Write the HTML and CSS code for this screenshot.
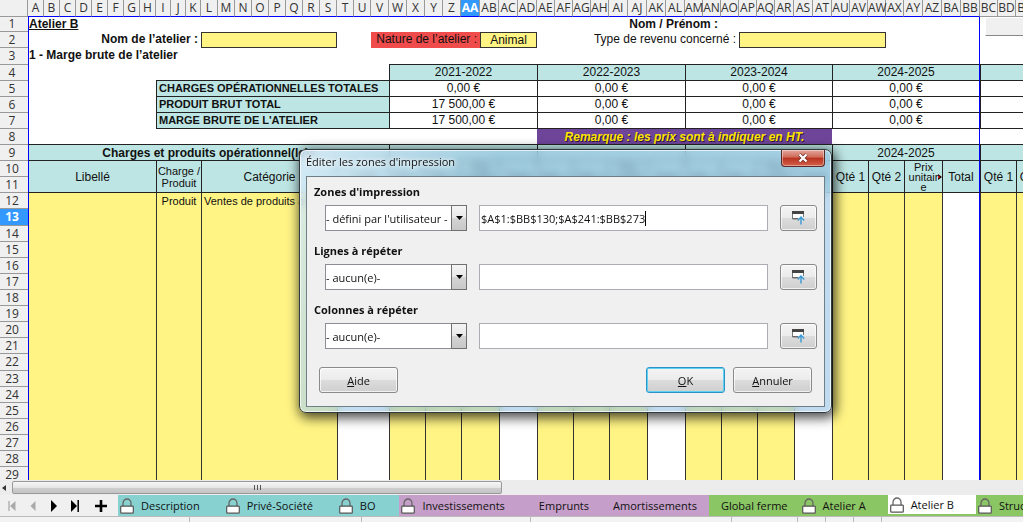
FILE: index.html
```html
<!DOCTYPE html>
<html lang="fr">
<head>
<meta charset="utf-8">
<title>Atelier B</title>
<link rel="stylesheet" href="styles.css">
</head>
<body>
<svg class="defs" aria-hidden="true">
  <symbol id="lock" viewBox="0 0 14 16"><path d="M3 8.500V5.200a4 4.200 0 0 1 8 0V8.500" fill="none" stroke="#666" stroke-width="1.300"/><rect x=".7" y="8.200" width="12.600" height="7" rx=".8" fill="#fff" stroke="#555" stroke-width="1.200"/></symbol>
  <symbol id="shrink" viewBox="0 0 13 14"><path d="M.5 1v7H6.500M11.500 6V1" fill="none" stroke="#777"/><path d="M0 0h12v3H0z" fill="#444"/><path d="M1 3h10v4H1z" fill="#fff"/><path d="M.5 7.500H6" stroke="#666"/><path d="M9 13.500V6.500M5.800 9.500L9 6l3.200 3.500" fill="none" stroke="#3a9bd5" stroke-width="1.400"/></symbol>
  <symbol id="caret" viewBox="0 0 7 4"><path d="M0 0h7L3.500 4z" fill="#000"/></symbol>
</svg>
<div class="app">
  <main class="sheet">
    <table class="grid">
      <colgroup><col class="c-head"></colgroup>
      <colgroup><col class="w16" span="8"><col class="w15" span="3"><col class="w17" span="10"><col class="w18"></colgroup>
      <colgroup><col class="w18" span="4"><col class="w19" span="4"></colgroup>
      <colgroup><col class="w18" span="4"><col class="w19" span="4"></colgroup>
      <colgroup><col class="w18" span="5"><col class="w19" span="3"></colgroup>
      <colgroup><col class="w18" span="4"><col class="w19" span="4"></colgroup>
      <colgroup><col class="w18" span="4"></colgroup>
      <thead>
        <tr><th class="corner"></th><th>A</th><th>B</th><th>C</th><th>D</th><th>E</th><th>F</th><th>G</th><th>H</th><th>I</th><th>J</th><th>K</th><th>L</th><th>M</th><th>N</th><th>O</th><th>P</th><th>Q</th><th>R</th><th>S</th><th>T</th><th>U</th><th>V</th><th>W</th><th>X</th><th>Y</th><th>Z</th><th class="current">AA</th><th>AB</th><th>AC</th><th>AD</th><th>AE</th><th>AF</th><th>AG</th><th>AH</th><th>AI</th><th>AJ</th><th>AK</th><th>AL</th><th>AM</th><th>AN</th><th>AO</th><th>AP</th><th>AQ</th><th>AR</th><th>AS</th><th>AT</th><th>AU</th><th>AV</th><th>AW</th><th>AX</th><th>AY</th><th>AZ</th><th>BA</th><th>BB</th><th class="outside">BC</th><th class="outside">BD</th><th class="outside">BE</th><th class="outside"></th></tr>
      </thead>
      <tbody class="summary">
        <tr class="first"><th>1</th><td class="area-l bold under" colspan="22">Atelier B</td><td colspan="18" class="bold right">Nom / Prénom :</td><td colspan="14" class="area-r"></td><td colspan="4"></td></tr>
        <tr><th>2</th><td class="area-l bold right" colspan="11">Nom de l’atelier :</td><td class="field" colspan="8"></td><td colspan="2"></td><td class="nature" colspan="6">Nature de l’atelier :</td><td class="field center" colspan="3">Animal</td><td class="right" colspan="11">Type de revenu concerné :</td><td class="field" colspan="8"></td><td class="area-r" colspan="5"></td><td colspan="4"></td></tr>
        <tr class="tall"><th>3</th><td class="area-l bold" colspan="22">1 - Marge brute de l’atelier</td><td class="line area-r" colspan="32"></td><td class="line" colspan="4"></td></tr>
        <tr><th>4</th><td class="area-l" colspan="8"></td><td class="line" colspan="14"></td><td class="teal cell" colspan="8">2021-2022</td><td class="teal cell" colspan="8">2022-2023</td><td class="teal cell" colspan="8">2023-2024</td><td class="teal cell area-r" colspan="8">2024-2025</td><td class="teal cell" colspan="4"></td></tr>
        <tr><th>5</th><td class="area-l" colspan="8"></td><td class="teal cell label" colspan="14">CHARGES OPÉRATIONNELLES TOTALES</td><td class="cell" colspan="8">0,00 €</td><td class="cell" colspan="8">0,00 €</td><td class="cell" colspan="8">0,00 €</td><td class="cell area-r" colspan="8">0,00 €</td><td class="cell" colspan="4"></td></tr>
        <tr><th>6</th><td class="area-l" colspan="8"></td><td class="teal cell label" colspan="14">PRODUIT BRUT TOTAL</td><td class="cell" colspan="8">17 500,00 €</td><td class="cell" colspan="8">0,00 €</td><td class="cell" colspan="8">0,00 €</td><td class="cell area-r" colspan="8">0,00 €</td><td class="cell" colspan="4"></td></tr>
        <tr><th>7</th><td class="area-l" colspan="8"></td><td class="teal cell label" colspan="14">MARGE BRUTE DE L'ATELIER</td><td class="cell" colspan="8">17 500,00 €</td><td class="cell" colspan="8">0,00 €</td><td class="cell" colspan="8">0,00 €</td><td class="cell area-r" colspan="8">0,00 €</td><td class="cell" colspan="4"></td></tr>
      </tbody>
      <tbody>
        <tr><th>8</th><td class="area-l line" colspan="30"></td><td class="remark line" colspan="16">Remarque : les prix sont à indiquer en HT.</td><td class="area-r line" colspan="8"></td><td class="line" colspan="4"></td></tr>
        <tr><th>9</th><td class="area-l teal line center bold" colspan="22">Charges et produits opérationnel(le)s</td><td class="teal cell" colspan="8"></td><td class="teal cell" colspan="8"></td><td class="teal cell" colspan="8"></td><td class="teal cell area-r" colspan="8">2024-2025</td><td class="teal cell" colspan="4"></td></tr>
        <tr><th>10</th><td class="area-l teal line center" colspan="8" rowspan="2">Libellé</td><td class="teal cell small" colspan="3" rowspan="2">Charge / Produit</td><td class="teal cell" colspan="8" rowspan="2">Catégorie</td><td class="teal cell" colspan="3" rowspan="2">Unité</td>
          <td class="teal cell" colspan="2" rowspan="2">Qté 1</td><td class="teal cell" colspan="2" rowspan="2">Qté 2</td><td class="teal cell price" colspan="2" rowspan="2">Prix unitair e</td><td class="teal cell" colspan="2" rowspan="2">Total</td>
          <td class="teal cell" colspan="2" rowspan="2">Qté 1</td><td class="teal cell" colspan="2" rowspan="2">Qté 2</td><td class="teal cell price" colspan="2" rowspan="2">Prix unitair e</td><td class="teal cell" colspan="2" rowspan="2">Total</td>
          <td class="teal cell" colspan="2" rowspan="2">Qté 1</td><td class="teal cell" colspan="2" rowspan="2">Qté 2</td><td class="teal cell price" colspan="2" rowspan="2">Prix unitair e</td><td class="teal cell" colspan="2" rowspan="2">Total</td>
          <td class="teal cell" colspan="2" rowspan="2">Qté 1</td><td class="teal cell" colspan="2" rowspan="2">Qté 2</td><td class="teal cell price" colspan="2" rowspan="2">Prix unitair e<svg class="more" viewBox="0 0 4 6"><path d="M0 0l4 3-4 3z" fill="#200"/><path d="M0 1.500l2 1.500-2 1.500z" fill="#e22"/></svg></td><td class="teal cell area-r" colspan="2" rowspan="2">Total</td>
          <td class="teal cell" colspan="2" rowspan="2">Qté 1</td><td class="teal cell" colspan="2" rowspan="2">Qté 2</td></tr>
        <tr><th>11</th></tr>
        <tr><th>12</th><td class="area-l yellow" colspan="8"></td><td class="yellow side small" colspan="3">Produit</td><td class="yellow side small text" colspan="8">Ventes de produits animaux</td><td class="side" colspan="3"></td>
          <td class="yellow side" colspan="2"></td><td class="yellow side" colspan="2"></td><td class="yellow side" colspan="2"></td><td class="side" colspan="2"></td>
          <td class="yellow side" colspan="2"></td><td class="yellow side" colspan="2"></td><td class="yellow side" colspan="2"></td><td class="side" colspan="2"></td>
          <td class="yellow side" colspan="2"></td><td class="yellow side" colspan="2"></td><td class="yellow side" colspan="2"></td><td class="side" colspan="2"></td>
          <td class="yellow side" colspan="2"></td><td class="yellow side" colspan="2"></td><td class="yellow side" colspan="2"></td><td class="side area-r" colspan="2"></td>
          <td class="yellow side" colspan="2"></td><td class="yellow side" colspan="2"></td></tr>
        <tr class="tall"><th class="current">13</th><td class="area-l yellow" colspan="8" rowspan="17"></td><td class="yellow side" colspan="3" rowspan="17"></td><td class="yellow side" colspan="8" rowspan="17"></td><td class="side" colspan="3" rowspan="17"></td>
          <td class="yellow side" colspan="2" rowspan="17"></td><td class="yellow side" colspan="2" rowspan="17"></td><td class="yellow side" colspan="2" rowspan="17"></td><td class="side" colspan="2" rowspan="17"></td>
          <td class="yellow side" colspan="2" rowspan="17"></td><td class="yellow side" colspan="2" rowspan="17"></td><td class="yellow side" colspan="2" rowspan="17"></td><td class="side" colspan="2" rowspan="17"></td>
          <td class="yellow side" colspan="2" rowspan="17"></td><td class="yellow side" colspan="2" rowspan="17"></td><td class="yellow side" colspan="2" rowspan="17"></td><td class="side" colspan="2" rowspan="17"></td>
          <td class="yellow side" colspan="2" rowspan="17"></td><td class="yellow side" colspan="2" rowspan="17"></td><td class="yellow side" colspan="2" rowspan="17"></td><td class="side area-r" colspan="2" rowspan="17"></td>
          <td class="yellow side" colspan="2" rowspan="17"></td><td class="yellow side" colspan="2" rowspan="17"></td></tr>
        <tr><th>14</th></tr><tr><th>15</th></tr><tr><th>16</th></tr><tr><th>17</th></tr><tr><th>18</th></tr><tr><th>19</th></tr><tr><th>20</th></tr><tr><th>21</th></tr>
        <tr class="tall"><th>22</th></tr><tr><th>23</th></tr><tr><th>24</th></tr><tr><th>25</th></tr><tr><th>26</th></tr><tr><th>27</th></tr><tr><th>28</th></tr><tr><th>29</th></tr>
      </tbody>
    </table>
    <button class="sheet-button" aria-label="Action"></button>
  </main>

  <div class="scrollbar">
    <button class="scroll-left" aria-label="Défiler à gauche"><svg width="4" height="6" viewBox="0 0 4 6"><path d="M4 0v6L0 3z" fill="#333"/></svg></button>
    <div class="track"><div class="thumb"><i></i><i></i><i></i></div></div>
  </div>

  <nav class="tabs">
    <div class="nav">
      <button aria-label="Première feuille" disabled><svg viewBox="0 0 12 12"><path d="M3 1v10" stroke="#aaa" stroke-width="1.300"/><path d="M9.500 1v10L4 6z" fill="#aaa"/></svg></button>
      <button aria-label="Feuille précédente" disabled><svg viewBox="0 0 12 12"><path d="M8.500 1v10L3.500 6z" fill="#aaa"/></svg></button>
      <button aria-label="Feuille suivante"><svg viewBox="0 0 12 12"><path d="M3 0v12l6-6z" fill="#000"/></svg></button>
      <button aria-label="Dernière feuille"><svg viewBox="0 0 12 12"><path d="M2 0v12l6-6z" fill="#000"/><path d="M9.200 0v12" stroke="#000" stroke-width="1.500"/></svg></button>
      <button class="add" aria-label="Ajouter une feuille"><svg viewBox="0 0 12 12"><path d="M6 0v12M0 6h12" stroke="#000" stroke-width="2.600"/></svg></button>
    </div>
    <button class="tab aqua"><svg><use href="#lock"/></svg>Description</button>
    <button class="tab aqua"><svg><use href="#lock"/></svg>Privé-Société</button>
    <button class="tab aqua"><svg><use href="#lock"/></svg>BO</button>
    <button class="tab lilac"><svg><use href="#lock"/></svg>Investissements</button>
    <button class="tab lilac open">Emprunts</button>
    <button class="tab lilac open">Amortissements</button>
    <button class="tab green open">Global ferme</button>
    <button class="tab green"><svg><use href="#lock"/></svg>Atelier A</button>
    <button class="tab green active"><svg><use href="#lock"/></svg>Atelier B</button>
    <button class="tab green"><svg><use href="#lock"/></svg>Structure</button>
  </nav>
  <footer class="status"><span class="s190"></span><span class="s172"></span><span class="s169"></span><span class="s201"></span><span class="s66"></span><span class="s28"></span><span class="s28"></span><span class="s28"></span></footer>
</div>

<section class="dialog" role="dialog" aria-labelledby="dlg-title">
  <header class="titlebar"><span id="dlg-title">Éditer les zones d'impression</span>
    <button class="close" aria-label="Fermer"><svg viewBox="0 0 12 10"><path d="M2.500 1.500l7 7M9.500 1.500l-7 7" stroke="#6b2a22" stroke-width="3.800"/><path d="M2.500 1.500l7 7M9.500 1.500l-7 7" stroke="#fff" stroke-width="2.400"/></svg></button>
  </header>
  <form class="client">
    <label class="heading" for="area">Zones d'impression</label>
    <div class="row">
      <span class="combo"><select id="area"><option>- défini par l'utilisateur -</option></select><span class="drop"><svg><use href="#caret"/></svg></span></span>
      <span class="entry"><input type="text" aria-label="Plage d'impression" value="$A$1:$BB$130;$A$241:$BB$273" size="27"><i class="cursor"></i></span>
      <button type="button" class="btn pick" aria-label="Réduire"><svg><use href="#shrink"/></svg></button>
    </div>
    <label class="heading" for="rows">Lignes à répéter</label>
    <div class="row">
      <span class="combo"><select id="rows"><option>- aucun(e)-</option></select><span class="drop"><svg><use href="#caret"/></svg></span></span>
      <span class="entry"><input type="text" aria-label="Plage de lignes"></span>
      <button type="button" class="btn pick" aria-label="Réduire"><svg><use href="#shrink"/></svg></button>
    </div>
    <label class="heading" for="cols">Colonnes à répéter</label>
    <div class="row">
      <span class="combo"><select id="cols"><option>- aucun(e)-</option></select><span class="drop"><svg><use href="#caret"/></svg></span></span>
      <span class="entry"><input type="text" aria-label="Plage de colonnes"></span>
      <button type="button" class="btn pick" aria-label="Réduire"><svg><use href="#shrink"/></svg></button>
    </div>
    <div class="actions">
      <button type="button" class="btn"><u>A</u>ide</button>
      <button type="button" class="btn default"><u>O</u>K</button>
      <button type="button" class="btn"><u>A</u>nnuler</button>
    </div>
  </form>
</section>
</body>
</html>
```
FILE: styles.css
```css
:root {
  --ui: "Open Sans", "Noto Sans", sans-serif;
  --teal: #bde5e3;
  --yellow: #fff484;
  --blue: #0000ff;
}
* { box-sizing: border-box; }
body { margin: 0; overflow: hidden; font-family: var(--ui); font-size: 11px; color: #111; }
button, select, input { font: inherit; color: inherit; margin: 0; }
.defs { position: absolute; width: 0; height: 0; }
.app { display: flex; flex-direction: column; height: 100vh; background: #f0f0f0; }

/* Spreadsheet */
.sheet { position: relative; flex: 1; min-height: 0; overflow: hidden; background: #fff; }
.grid { table-layout: fixed; width: 0; border-collapse: separate; border-spacing: 0; font-family: "Liberation Sans", Arial, sans-serif; font-size: 12px; line-height: 14px; color: #111; }
.c-head { width: 28px; }
.w15 { width: 15px; }
.w16 { width: 16px; }
.w17 { width: 17px; }
.w18 { width: 18px; }
.w19 { width: 19px; }
.grid th, .grid td { padding: 0; white-space: nowrap; }
.grid tr { height: 16px; }
.grid tr.tall { height: 17px; }
.grid tr.first { height: 15px; }
.grid thead tr { height: 17px; }
.grid th { font-family: var(--ui); font-size: 12px; font-weight: 400; color: #333; background: #f0f0f0; }
.grid thead th { border-right: 1px solid #999; border-bottom: 1px solid var(--blue); }
.grid thead .corner, .grid thead .outside { border-bottom-color: #999; }
.grid tbody th { padding-right: 4px; border-bottom: 1px solid #999; }
.grid th.current { background: #3399ff; color: #fff; font-weight: 700; }
.summary td { vertical-align: top; }
.area-l { border-left: 1px solid var(--blue); }
.grid .area-r { border-right: 1px solid var(--blue); }
.bold { font-weight: 700; }
.under { text-decoration: underline; }
.grid .right { padding-right: 3px; text-align: right; }
.center { text-align: center; }
.line { border-bottom: 1px solid #222; }
.cell { border-left: 1px solid #222; border-bottom: 1px solid #222; text-align: center; }
.side { border-left: 1px solid #333; }
.teal { background: var(--teal); }
.yellow { background: var(--yellow); }
.field { border: 1px solid #333; background: var(--yellow); }
.grid .nature { padding-right: 3px; text-align: right; background: #f04c4c; }
.grid .label { padding-left: 2px; font-size: 11px; font-weight: 700; text-align: left; }
.remark { background: #6f459a; color: #ffe600; font-weight: 700; font-style: italic; text-align: center; text-shadow: 1px 1px 0 #2a1540; }
.grid .small { font-size: 11px; line-height: 12px; white-space: normal; text-align: center; }
.grid .small.text { padding-left: 2px; white-space: nowrap; text-align: left; overflow: hidden; }
.grid .price { position: relative; font-size: 11px; line-height: 10px; white-space: normal; }
.more { position: absolute; right: 0; top: 13px; width: 4px; height: 6px; }
.sheet-button { position: absolute; left: 985px; top: 17px; width: 80px; height: 19px; border: 1px solid #fff; border-bottom-color: #888; background: #f0f0f0; }

/* Horizontal scrollbar */
.scrollbar { display: flex; height: 15px; padding: 1px 0; background: #ececec; }
.scroll-left { display: flex; align-items: center; width: 12px; padding: 0 0 0 2px; border: 0; background: none; }
.track { flex: 1; }
.thumb { display: flex; align-items: center; justify-content: center; gap: 2px; width: 48.5%; height: 13px; border: 1px solid #999; border-radius: 2px; background: linear-gradient(#f6f6f6, #e6e6e6 50%, #cfcfcf 51%, #c4c4c4); }
.thumb i { width: 1px; height: 5px; background: #555; }

/* Sheet tabs */
.tabs { display: flex; height: 22px; border-bottom: 1px solid #bbb; overflow: hidden; }
.nav { display: flex; flex: none; align-items: center; width: 118px; padding-left: 1px; }
.nav button { display: flex; justify-content: center; width: 21px; padding: 0; border: 0; background: none; }
.nav .add { width: 32px; }
.nav svg { width: 12px; height: 12px; }
.tab { display: flex; flex: none; align-items: center; gap: 7px; padding: 0 22px 0 2px; border: 0; }
.tab.open { padding: 0 12px; }
.tab svg { width: 14px; height: 16px; }
.aqua { padding-right: 24px; background: #87d1d1; }
.lilac { background: #c59fc9; }
.green { background: #8bc664; }
.tab.active { background: #fff; border-bottom: 2px solid #8bc664; }

/* Status bar */
.status { display: flex; height: 5px; background: #f3f3f3; }
.status span { border-right: 1px solid #bbb; }
.s190 { width: 190px; }
.s172 { width: 172px; }
.s169 { width: 169px; }
.s201 { width: 201px; }
.s66 { width: 66px; }
.s28 { width: 28px; }

/* Dialog */
.dialog { position: absolute; left: 299px; top: 149px; width: 533px; padding: 0 6px 5px; border: 1px solid #2f3a40; border-radius: 7px; background: linear-gradient(115deg, rgba(215, 235, 248, .85), rgba(140, 190, 225, .55) 30%, rgba(150, 195, 230, .6)); backdrop-filter: blur(4px); box-shadow: inset 0 0 0 1px rgba(255, 255, 255, .7), 2px 3px 12px 2px rgba(0, 0, 0, .7); }
.titlebar { display: flex; justify-content: space-between; height: 26px; line-height: 24px; text-shadow: 0 0 5px #fff, 0 0 5px #fff; }
.close { display: flex; align-items: center; justify-content: center; width: 44px; height: 17px; padding: 0; border: 1px solid #5c2a25; border-top: 0; border-radius: 0 0 4px 4px; background: linear-gradient(#e3a79c, #cf6a58 45%, #b8321f 50%, #d4604a); box-shadow: inset 0 0 0 1px rgba(255, 255, 255, .4); }
.close svg { width: 12px; height: 10px; }
.client { display: flex; flex-direction: column; padding: 7px 7px 13px; border: 1px solid #6f7f88; background: #f0f0f0; }
.heading { height: 16px; margin-bottom: 5px; line-height: 16px; font-weight: 700; }
.row { display: grid; grid-template-columns: 142px 1fr 37px; gap: 12px; height: 26px; margin: 0 0 12px 11px; }
.combo, .entry { position: relative; display: flex; }
.combo select { flex: 1; min-width: 0; padding: 0; border: 1px solid #8b8e96; border-radius: 0; background: #fff; appearance: none; }
.drop { position: absolute; right: 0; top: 0; display: flex; align-items: center; justify-content: center; width: 16px; height: 26px; border: 1px solid #707070; background: linear-gradient(#f4f4f4, #e8e8e8 50%, #d4d4d4 51%, #c8c8c8); pointer-events: none; }
.drop svg { width: 7px; height: 4px; }
.entry { align-items: center; padding-left: 1px; border: 1px solid #abadb3; background: #fff; overflow: hidden; }
.entry input { flex: none; width: 100%; padding: 0; border: 0; outline: 0; background: none; }
.entry input[size] { width: auto; field-sizing: content; }
.cursor { width: 1px; height: 15px; background: #000; }
.btn { padding: 0; border: 1px solid #8a8a8a; border-radius: 3px; background: linear-gradient(#f4f4f4, #ebebeb 50%, #dcdcdc 51%, #cfcfcf); box-shadow: inset 0 0 0 1px rgba(255, 255, 255, .7); }
.pick { display: flex; align-items: center; justify-content: center; }
.pick svg { width: 13px; height: 14px; }
.actions { display: flex; gap: 8px; height: 26px; margin: 6px 5px 0; }
.actions .btn { width: 79px; }
.actions .default { margin-left: auto; border-color: #2c93c4; box-shadow: inset 0 0 0 1px #5fd2f4; }
```
